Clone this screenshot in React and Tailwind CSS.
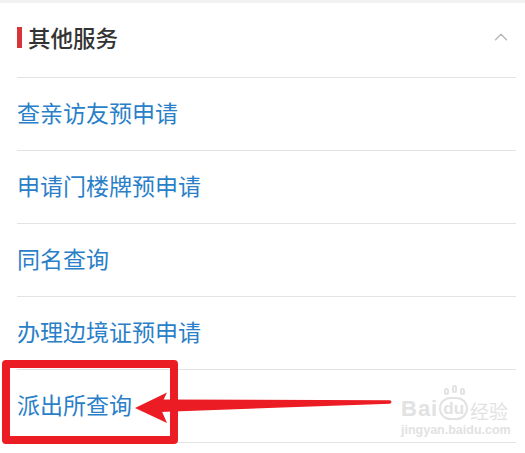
import { ChevronUp } from 'lucide-react'

const items = ['查亲访友预申请', '申请门楼牌预申请', '同名查询', '办理边境证预申请', '派出所查询']

export default function App() {
  return (
    <div className="relative w-[525px] h-[453px] bg-white overflow-hidden font-['Noto_Sans_CJK_SC','Noto_Sans',sans-serif]">
      <div className="h-[3px] bg-[#f2f2f2]" />
      <div className="pl-[17px] pr-[9px]">
        <div className="h-[75px] flex items-center justify-between border-b border-[#e3e3e3] pb-[6px]">
          <div className="flex items-center gap-[6px]">
            <span className="w-[5px] h-[21px] bg-[#d8353b]" />
            <span className="text-[22.5px] leading-none text-[#333] font-medium">其他服务</span>
          </div>
          <ChevronUp size={22} strokeWidth={1.5} className="text-[#b8b8b8] mr-[4px]" />
        </div>
        {items.map(t => (
          <div key={t} className="h-[73px] flex items-center border-b border-[#e3e3e3] pb-[4px]">
            <span className="text-[23px] leading-none text-[#2a7fc8]">{t}</span>
          </div>
        ))}
      </div>

      {/* highlight box */}
      <div className="absolute left-[2px] top-[360px] w-[176px] h-[84px] border-[8px] border-[#ec1c24] rounded-[4px]" />

      {/* arrow */}
      <svg className="absolute left-0 top-0" width="525" height="453">
        <path d="M160 399.5 L390 400.3 Q393 402 390 403.7 L160 412 Z" fill="#ec1c24" />
        <path d="M135 408 L167 392.5 L160 407 L167 423 Z" fill="#ec1c24" />
      </svg>

      {/* watermark */}
      <div className="absolute left-[401px] top-[397px] flex flex-col items-start leading-none text-[#e2e2e2] font-['Liberation_Sans',sans-serif]">
        <div className="flex items-end">
          <span className="text-[22px] font-bold tracking-[1px]">Bai</span>
          <span className="relative text-[17px] font-bold border-[2px] border-[#e2e2e2] rounded-full px-[2px] py-[1px] ml-[1px]">
            du
            <span className="absolute left-[3px] -top-[11px] flex gap-[3px]">
              <span className="w-[5px] h-[7px] rounded-full border-[2px] border-[#e2e2e2]" />
              <span className="w-[5px] h-[8px] rounded-full border-[2px] border-[#e2e2e2] -mt-[3px]" />
              <span className="w-[5px] h-[7px] rounded-full border-[2px] border-[#e2e2e2]" />
            </span>
          </span>
          <span className="text-[19px] font-['Noto_Sans_CJK_SC',sans-serif] ml-[2px]">经验</span>
        </div>
        <span className="text-[12.5px] mt-[4px] font-bold">jingyan.baidu.com</span>
      </div>
    </div>
  )
}
